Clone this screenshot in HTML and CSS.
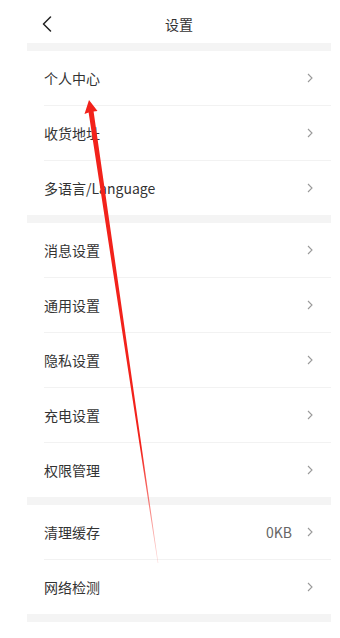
FILE: index.html
```html
<!DOCTYPE html>
<html lang="zh">
<head>
<meta charset="utf-8">
<title>设置</title>
<link rel="stylesheet" href="styles.css">
</head>
<body>
<div class="page">
  <header class="header">
    <svg class="back" width="10" height="16" viewBox="0 0 10 16"><path d="M8.5 1 L1.5 8 L8.5 15" fill="none" stroke="#222" stroke-width="1.5" stroke-linecap="round" stroke-linejoin="round"/></svg>
    <div class="title">设置</div>
  </header>
  <div class="gap"></div>
  <section class="group">
    <div class="row"><span class="label">个人中心</span><span class="right"><svg class="chev" width="6" height="10" viewBox="0 0 6 10"><path d="M1 1 L5 5 L1 9" fill="none" stroke="#9a9a9a" stroke-width="1.1"/></svg></span></div>
    <div class="row"><span class="label">收货地址</span><span class="right"><svg class="chev" width="6" height="10" viewBox="0 0 6 10"><path d="M1 1 L5 5 L1 9" fill="none" stroke="#9a9a9a" stroke-width="1.1"/></svg></span></div>
    <div class="row"><span class="label">多语言/Language</span><span class="right"><svg class="chev" width="6" height="10" viewBox="0 0 6 10"><path d="M1 1 L5 5 L1 9" fill="none" stroke="#9a9a9a" stroke-width="1.1"/></svg></span></div>
  </section>
  <div class="gap"></div>
  <section class="group">
    <div class="row"><span class="label">消息设置</span><span class="right"><svg class="chev" width="6" height="10" viewBox="0 0 6 10"><path d="M1 1 L5 5 L1 9" fill="none" stroke="#9a9a9a" stroke-width="1.1"/></svg></span></div>
    <div class="row"><span class="label">通用设置</span><span class="right"><svg class="chev" width="6" height="10" viewBox="0 0 6 10"><path d="M1 1 L5 5 L1 9" fill="none" stroke="#9a9a9a" stroke-width="1.1"/></svg></span></div>
    <div class="row"><span class="label">隐私设置</span><span class="right"><svg class="chev" width="6" height="10" viewBox="0 0 6 10"><path d="M1 1 L5 5 L1 9" fill="none" stroke="#9a9a9a" stroke-width="1.1"/></svg></span></div>
    <div class="row"><span class="label">充电设置</span><span class="right"><svg class="chev" width="6" height="10" viewBox="0 0 6 10"><path d="M1 1 L5 5 L1 9" fill="none" stroke="#9a9a9a" stroke-width="1.1"/></svg></span></div>
    <div class="row"><span class="label">权限管理</span><span class="right"><svg class="chev" width="6" height="10" viewBox="0 0 6 10"><path d="M1 1 L5 5 L1 9" fill="none" stroke="#9a9a9a" stroke-width="1.1"/></svg></span></div>
  </section>
  <div class="gap"></div>
  <section class="group">
    <div class="row"><span class="label">清理缓存</span><span class="right"><span class="value">0KB</span><svg class="chev" width="6" height="10" viewBox="0 0 6 10"><path d="M1 1 L5 5 L1 9" fill="none" stroke="#9a9a9a" stroke-width="1.1"/></svg></span></div>
    <div class="row"><span class="label">网络检测</span><span class="right"><svg class="chev" width="6" height="10" viewBox="0 0 6 10"><path d="M1 1 L5 5 L1 9" fill="none" stroke="#9a9a9a" stroke-width="1.1"/></svg></span></div>
  </section>
  <div class="gap"></div>
</div>
<svg class="annot" width="340" height="638" viewBox="0 0 340 638">
  <defs>
    <linearGradient id="fade" x1="89" y1="100" x2="158" y2="563" gradientUnits="userSpaceOnUse">
      <stop offset="0" stop-color="#f2221b"/>
      <stop offset="0.75" stop-color="#f2221b"/>
      <stop offset="1" stop-color="#f2221b" stop-opacity="0.15"/>
    </linearGradient>
  </defs>
  <polygon points="89,100 97.5,111 93.6,111.5 158.3,563 157.7,563 88.6,112.5 84.5,114" fill="url(#fade)"/>
</svg>
</body>
</html>
```

FILE: styles.css
```css
html, body {
  margin: 0;
  padding: 0;
  background: #fff;
}
body {
  width: 340px;
  height: 638px;
  overflow: hidden;
  position: relative;
  font-family: "Noto Sans CJK SC", "Noto Sans", sans-serif;
  color: #333;
}
.page {
  margin-left: 27px;
  width: 304px;
}
.header {
  height: 43px;
  display: flex;
  align-items: center;
  justify-content: center;
  position: relative;
}
.back {
  position: absolute;
  left: 15px;
  top: 16px;
}
.title {
  font-size: 14px;
  color: #333;
  line-height: 20px;
  margin-top: 5px;
}
.gap {
  height: 8px;
  background: #f4f4f4;
}
.group {
  padding-left: 17px;
}
.row {
  height: 54px;
  display: flex;
  align-items: center;
  justify-content: space-between;
  padding-right: 18px;
  border-bottom: 1px solid #f2f2f2;
  font-size: 14px;
  line-height: 20px;
}
.row:last-child {
  border-bottom: none;
}
.label {
  color: #333;
}
.right {
  display: flex;
  align-items: center;
  gap: 15px;
}
.value {
  color: #666;
  font-size: 14px;
}
.chev {
  display: block;
}
.annot {
  position: absolute;
  left: 0;
  top: 0;
  pointer-events: none;
}
```
